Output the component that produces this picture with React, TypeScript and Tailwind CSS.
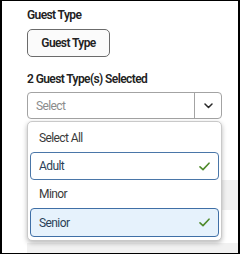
import React from "react";

const font = { fontFamily: "Roboto, 'Liberation Sans', sans-serif" };

function Check() {
  return (
    <svg width="11" height="9" viewBox="0 0 11 9" fill="none">
      <path d="M1 4.8 L4 7.6 L10 1.2" stroke="#4f8a2b" strokeWidth="1.6" strokeLinecap="round" strokeLinejoin="round" />
    </svg>
  );
}

export default function App() {
  return (
    <div
      className="w-[240px] h-[254px] bg-white border-black border-t border-b border-l-2 border-r-2 relative overflow-hidden text-[#333] tracking-[-0.6px]"
      style={font}
    >
      <div className="pl-[25px] pt-[6px]">
        <div className="text-[12px] leading-[16px] font-semibold text-[#222]">Guest Type</div>
        <button className="mt-[6px] w-[83px] h-[28px] rounded-[5px] border border-[#6b6b6b] bg-[#fbfbfb] text-[12px] font-semibold text-[#222] flex items-center justify-center">
          Guest Type
        </button>
        <div className="mt-[14px] text-[12px] leading-[16px] font-semibold text-[#222]">2 Guest Type(s) Selected</div>
        <div className="mt-[5px] w-[195px] h-[27px] rounded-[4px] border border-[#a3a3a3] flex bg-white">
          <div className="flex-1 flex items-center pl-[8px] text-[12px] text-[#8c8c8c]">Select</div>
          <div className="w-[27px] border-l border-[#a3a3a3] flex items-center justify-center">
            <svg width="9" height="6" viewBox="0 0 9 6" fill="none">
              <path d="M1 1 L4.5 4.5 L8 1" stroke="#2a2a2a" strokeWidth="1.5" strokeLinecap="round" strokeLinejoin="round" />
            </svg>
          </div>
        </div>
        <div className="mt-[61px] h-[30px] bg-[#f1f1f1]" />
        <div className="mt-[33px] h-[12px] bg-[#f1f1f1]" />
      </div>

      <div className="absolute left-[25px] top-[120px] w-[195px] rounded-[5px] border border-[#c9c9c9] bg-white p-[2px] pb-[3px] shadow-[0_2px_5px_rgba(0,0,0,0.28)] text-[12px]">
        <div className="h-[28px] flex items-center pl-[9px] text-[#3a3a3a]">Select All</div>
        <div className="h-[28px] flex items-center justify-between pl-[8px] pr-[8px] rounded-[4px] border border-[#4a76a8] bg-white text-[#2b3f57]">
          <span>Adult</span>
          <Check />
        </div>
        <div className="h-[28px] flex items-center pl-[9px] text-[#3a3a3a]">Minor</div>
        <div className="h-[29px] flex items-center justify-between pl-[8px] pr-[8px] rounded-[4px] border border-[#3f6fa6] bg-[#e6f2fc] text-[#2b3f57]">
          <span>Senior</span>
          <Check />
        </div>
      </div>
    </div>
  );
}
